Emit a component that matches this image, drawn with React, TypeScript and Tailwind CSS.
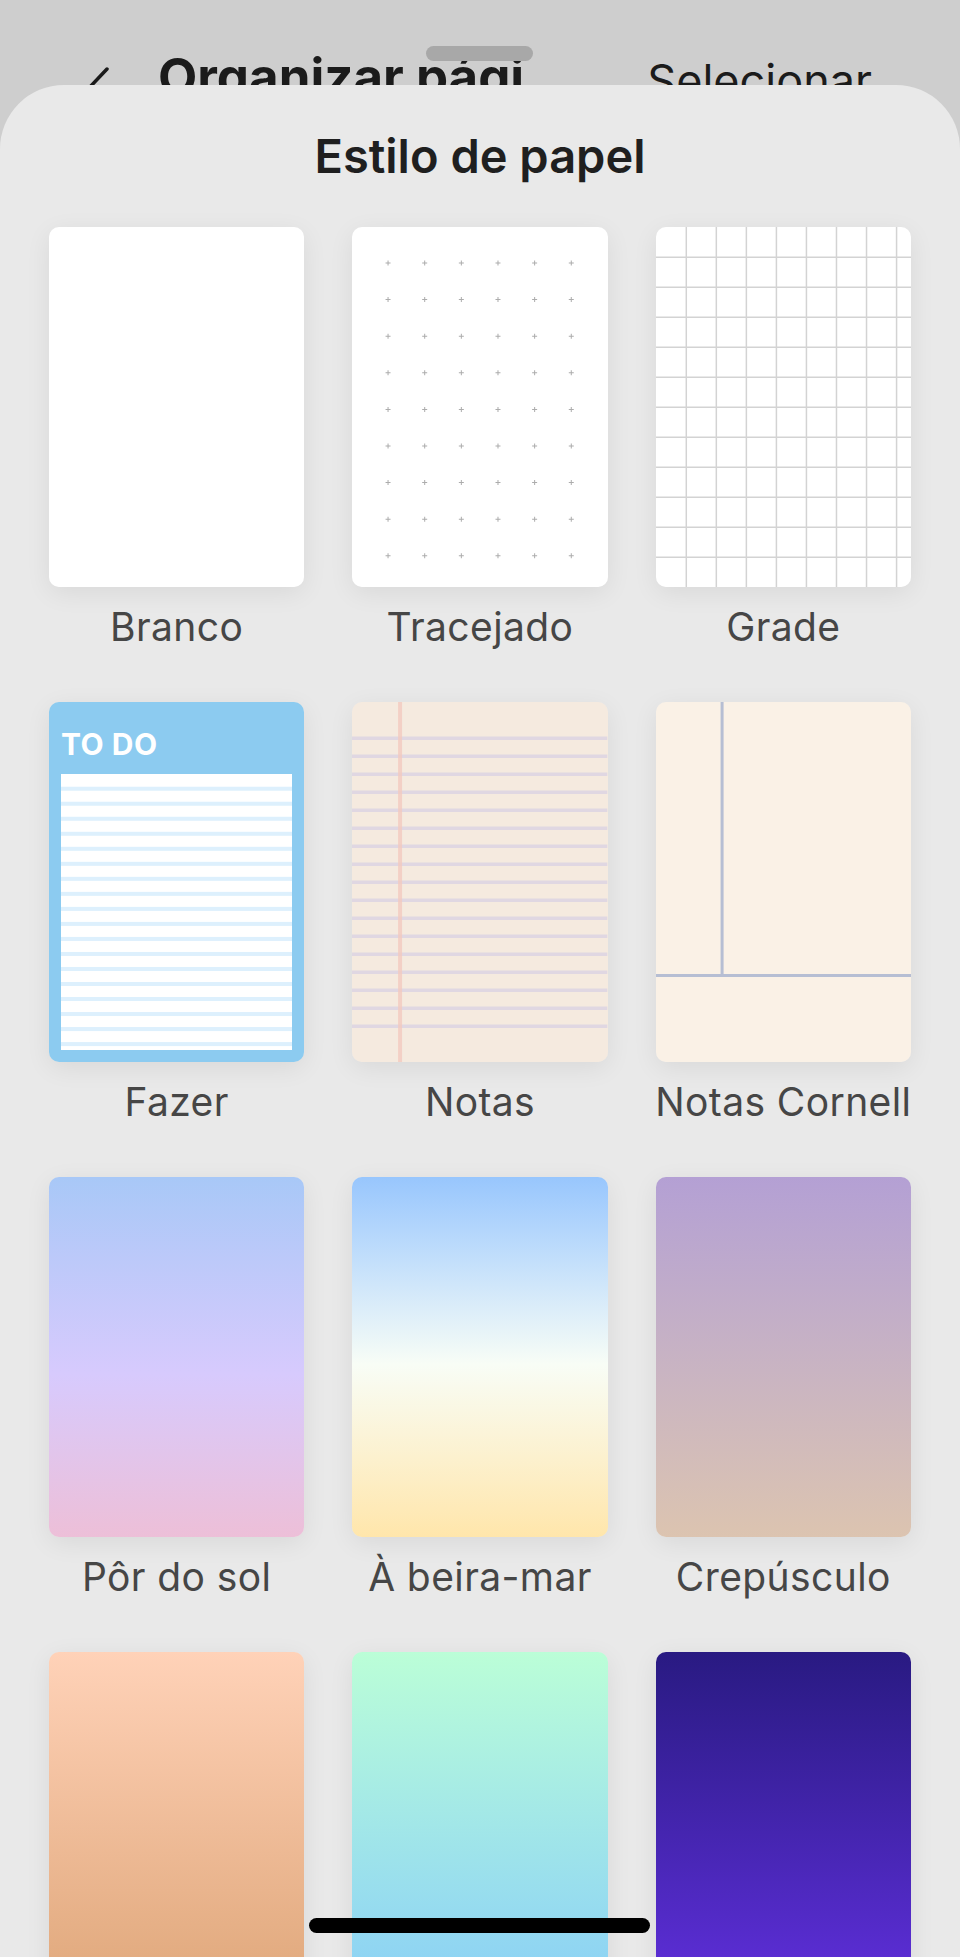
import type { ReactNode } from "react";

type Paper = {
  label?: string;
  kind: "blank" | "dots" | "grid" | "todo" | "notes" | "cornell" | "gradient";
  gradient?: string;
};

const PAPERS: Paper[] = [
  { label: "Branco", kind: "blank" },
  { label: "Tracejado", kind: "dots" },
  { label: "Grade", kind: "grid" },
  { label: "Fazer", kind: "todo" },
  { label: "Notas", kind: "notes" },
  { label: "Notas Cornell", kind: "cornell" },
  {
    label: "Pôr do sol",
    kind: "gradient",
    gradient: "bg-linear-to-b from-[#a8c8f7] via-[#d7cafd] via-55% to-[#edbfd8]",
  },
  {
    label: "À beira-mar",
    kind: "gradient",
    gradient: "bg-linear-to-b from-[#98c6fd] via-[#f8fdf6] via-52% to-[#ffe6ab]",
  },
  {
    label: "Crepúsculo",
    kind: "gradient",
    gradient: "bg-linear-to-b from-[#b4a0d4] to-[#dcc4b0]",
  },
  { kind: "gradient", gradient: "bg-linear-to-b from-[#ffd2b8] to-[#dea577]" },
  { kind: "gradient", gradient: "bg-linear-to-b from-[#bbfed7] to-[#88cdf7]" },
  { kind: "gradient", gradient: "bg-linear-to-b from-[#291a82] to-[#6230e0]" },
];

const range = (n: number) => Array.from({ length: n }, (_, i) => i);

function Sheet({ children }: { children: ReactNode }) {
  return (
    <svg className="block h-full w-full" viewBox="0 0 255 360" preserveAspectRatio="none">
      {children}
    </svg>
  );
}

function DotsPaper() {
  return (
    <div className="h-full bg-white">
      <Sheet>
        {range(6).map((c) =>
          range(9).map((r) => {
            const x = 36 + c * 36.6;
            const y = 36 + r * 36.6;
            return (
              <path
                key={`${c}-${r}`}
                d={`M${x - 2.5} ${y}h5M${x} ${y - 2.5}v5`}
                stroke="#acacac"
                strokeWidth="1"
              />
            );
          })
        )}
      </Sheet>
    </div>
  );
}

function GridPaper() {
  return (
    <div className="h-full bg-white">
      <Sheet>
        {range(8).map((i) => (
          <rect key={`v${i}`} x={29.5 + i * 30} y="0" width="1.5" height="360" fill="#d3d3d3" />
        ))}
        {range(11).map((i) => (
          <rect key={`h${i}`} x="0" y={29.5 + i * 30} width="255" height="1.5" fill="#d3d3d3" />
        ))}
      </Sheet>
    </div>
  );
}

function TodoPaper() {
  return (
    <div className="flex h-full flex-col bg-[#8ccbf0] px-[12px] pb-[12px]">
      <div className="h-[72px] pt-[27px] text-[30px] leading-[30px] font-bold tracking-[0.5px] text-white">
        TO DO
      </div>
      <div className="flex-1 bg-white">
        <svg className="block h-full w-full" viewBox="0 0 231 276" preserveAspectRatio="none">
          {range(18).map((i) => (
            <rect key={i} x="0" y={12.7 + i * 15} width="231" height="4" fill="#ddf0fd" />
          ))}
        </svg>
      </div>
    </div>
  );
}

function NotesPaper() {
  return (
    <div className="h-full bg-[#f5eadf]">
      <Sheet>
        {range(17).map((i) => (
          <rect key={i} x="0" y={34.5 + i * 18} width="255" height="3.5" fill="#e0d7e2" />
        ))}
        <rect x="46" y="0" width="4" height="360" fill="#f2c9bf" opacity="0.8" />
      </Sheet>
    </div>
  );
}

function CornellPaper() {
  return (
    <div className="h-full bg-[#faf1e6]">
      <Sheet>
        <rect x="64.5" y="0" width="3" height="273" fill="#b6bed3" />
        <rect x="0" y="272" width="255" height="3" fill="#b6bed3" />
      </Sheet>
    </div>
  );
}

function PaperPreview({ paper }: { paper: Paper }) {
  switch (paper.kind) {
    case "blank":
      return <div className="h-full bg-white" />;
    case "dots":
      return <DotsPaper />;
    case "grid":
      return <GridPaper />;
    case "todo":
      return <TodoPaper />;
    case "notes":
      return <NotesPaper />;
    case "cornell":
      return <CornellPaper />;
    default:
      return <div className={`h-full ${paper.gradient}`} />;
  }
}

export default function App() {
  return (
    <div className="relative h-[1957px] w-[960px] overflow-hidden bg-[#cecece] font-['Inter','Noto_Sans',sans-serif]">
      {/* underlying nav bar, covered by the sheet */}
      <div className="relative h-[85px] overflow-hidden">
        <div className="flex items-start pt-[52px] pl-[86px] pr-[88px] text-[#1b1b1b]">
          <svg width="24" height="42" viewBox="0 0 24 42" className="mt-[15px] shrink-0">
            <path d="M21 2 L3 21 L21 40" fill="none" stroke="#1b1b1b" strokeWidth="3.5" strokeLinecap="round" strokeLinejoin="round" />
          </svg>
          <span className="ml-[48px] text-[51px] leading-[49px] font-bold whitespace-nowrap">
            Organizar pági
          </span>
          <span className="ml-auto pt-[4px] text-[45px] leading-[49px] whitespace-nowrap">Selecionar</span>
        </div>
        <div className="absolute left-[426px] top-[46px] h-[15px] w-[107px] rounded-full bg-[#a8a8a8]" />
      </div>

      <div className="h-[1872px] rounded-t-[64px] bg-[#e9e9e9]">
        <h1 className="pt-[48px] text-center text-[47px] leading-[46px] font-semibold text-[#1f1f1f]">
          Estilo de papel
        </h1>
        <div className="mt-[48px] grid grid-cols-3 gap-x-[48px] gap-y-[52px] px-[49px]">
          {PAPERS.map((p, i) => (
            <div key={i} className="flex flex-col items-center">
              <div className="h-[360px] w-full overflow-hidden rounded-[10px] shadow-[0_6px_26px_rgba(0,0,0,0.07)]">
                <PaperPreview paper={p} />
              </div>
              {p.label && (
                <div className="mt-[17px] text-[39px] leading-[46px] tracking-[0.4px] whitespace-nowrap text-[#464646]">
                  {p.label}
                </div>
              )}
            </div>
          ))}
        </div>
      </div>

      <div className="absolute bottom-[24px] left-[309px] h-[15px] w-[341px] rounded-full bg-black" />
    </div>
  );
}
